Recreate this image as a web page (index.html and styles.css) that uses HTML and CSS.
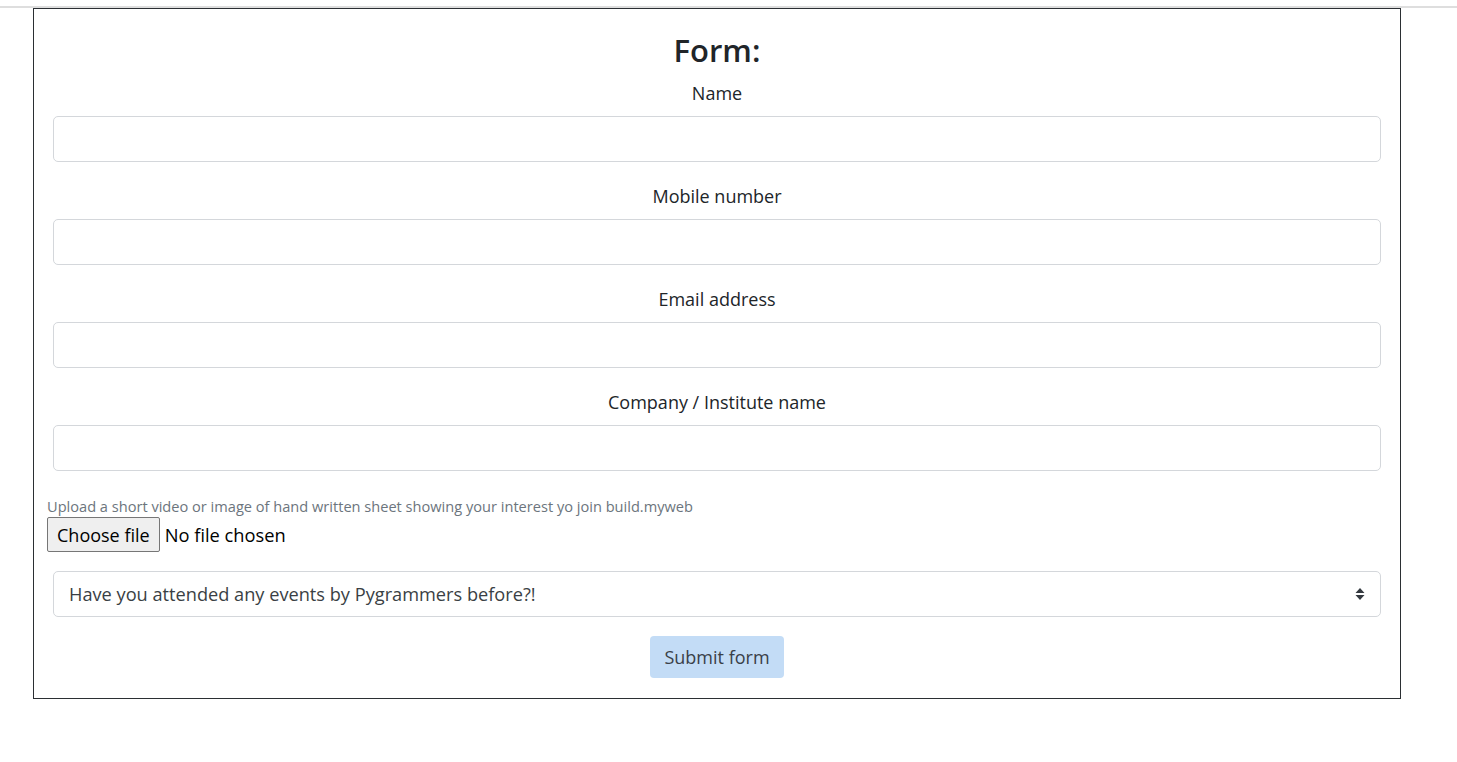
FILE: index.html
```html
<!DOCTYPE html>
<html lang="en">
<head>
<meta charset="utf-8">
<title>Form</title>
<link rel="stylesheet" href="styles.css">
</head>
<body>
<div class="topline"></div>
<main class="card">
  <h1 class="title">Form:</h1>
  <div class="group">
    <label class="label">Name</label>
    <div class="input"></div>
  </div>
  <div class="group">
    <label class="label">Mobile number</label>
    <div class="input"></div>
  </div>
  <div class="group">
    <label class="label">Email address</label>
    <div class="input"></div>
  </div>
  <div class="group">
    <label class="label">Company / Institute name</label>
    <div class="input"></div>
  </div>
  <div class="upload">
    <div class="hint">Upload a short video or image of hand written sheet showing your interest yo join build.myweb</div>
    <div class="file">
      <span class="file-btn">Choose file</span>
      <span class="file-name">No file chosen</span>
    </div>
  </div>
  <div class="select">
    <span class="select-text">Have you attended any events by Pygrammers before?!</span>
    <svg class="select-arrow" width="12" height="16" viewBox="0 0 12 16"><path d="M6 2 L10.5 7 H1.5 Z M6 14 L10.5 9 H1.5 Z" fill="#343a40"/></svg>
  </div>
  <div class="actions">
    <span class="submit">Submit form</span>
  </div>
</main>
</body>
</html>
```
FILE: styles.css
```css
html, body {
  margin: 0;
  padding: 0;
  background: #fff;
}
body {
  font-family: "Open Sans", "Noto Sans", sans-serif;
  color: #212529;
}
.topline {
  margin-top: 6px;
  height: 2px;
  background: #dedede;
}
.card {
  margin-left: 33px;
  width: 1366px;
  height: 689px;
  border: 1px solid #2b2f33;
  box-sizing: content-box;
  display: flex;
  flex-direction: column;
}
.title {
  margin: 22px 0 0;
  height: 38px;
  font-size: 31px;
  line-height: 38px;
  font-weight: 600;
  text-align: center;
  color: #212529;
}
.group {
  display: flex;
  flex-direction: column;
  align-items: center;
  margin-top: 11px;
}
.group + .group {
  margin-top: 21px;
}
.label {
  display: block;
  font-size: 18px;
  line-height: 27px;
  height: 27px;
  color: #212529;
}
.input {
  margin-top: 9px;
  align-self: stretch;
  margin-left: 19px;
  margin-right: 19px;
  height: 44px;
  border: 1px solid #d4d7db;
  border-radius: 5px;
}
.upload {
  margin-top: 25px;
  margin-left: 13px;
}
.hint {
  font-size: 14.6px;
  line-height: 21px;
  color: #6c757d;
}
.file {
  display: flex;
  align-items: center;
}
.file-btn {
  box-sizing: border-box;
  height: 35px;
  padding: 0 9px;
  display: flex;
  align-items: center;
  font-size: 18px;
  background: #efefef;
  border: 1px solid #767676;
  border-radius: 2px;
  color: #000;
}
.file-name {
  margin-left: 5px;
  font-size: 18.3px;
  color: #000;
}
.select {
  position: relative;
  margin: 19px 19px 0;
  height: 44px;
  border: 1px solid #d4d7db;
  border-radius: 5px;
  display: flex;
  align-items: center;
  padding-left: 15px;
}
.select-text {
  font-size: 18.2px;
  color: #3a3f44;
}
.select-arrow {
  position: absolute;
  right: 14px;
  top: 14px;
}
.actions {
  display: flex;
  justify-content: center;
  margin-top: 19px;
}
.submit {
  box-sizing: border-box;
  height: 42px;
  width: 134px;
  display: flex;
  align-items: center;
  justify-content: center;
  font-size: 18px;
  background: #c3dcf6;
  border-radius: 4px;
  color: #3a4048;
}
```
